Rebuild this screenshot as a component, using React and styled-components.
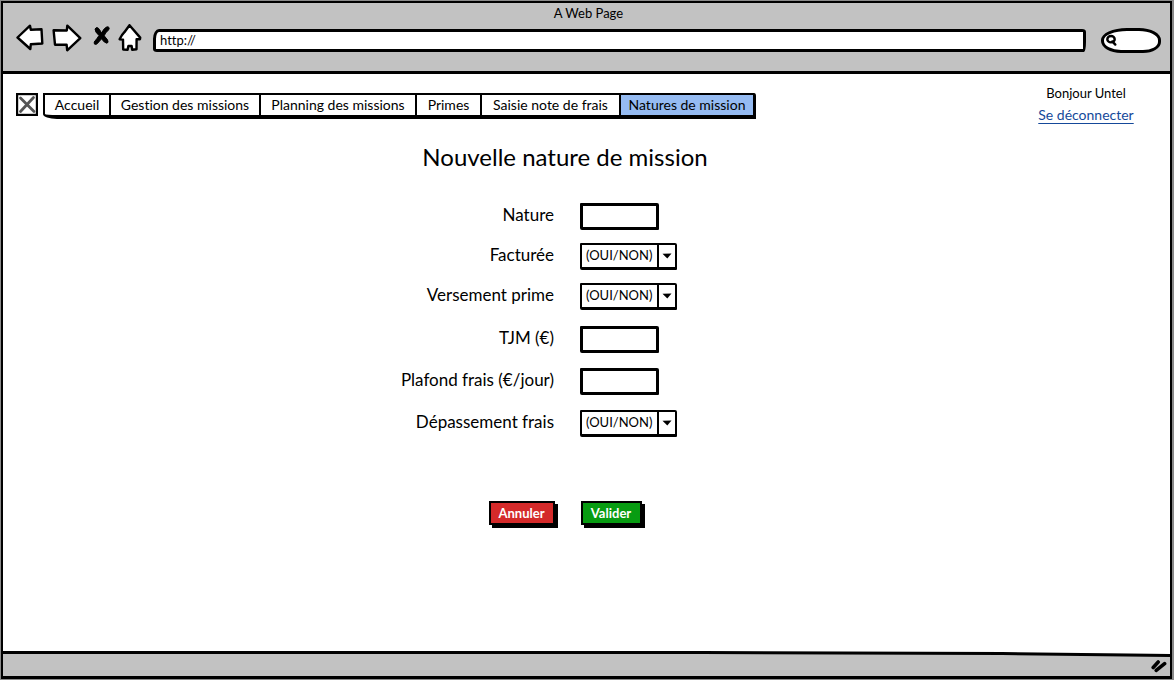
import React from 'react';
import styled, { createGlobalStyle } from 'styled-components';

const GlobalStyle = createGlobalStyle`
  *, *::before, *::after { box-sizing: border-box; }
  body {
    margin: 0;
    background: #fff;
    color: #000;
    font-family: Lato, "Open Sans", sans-serif;
    font-size: 13px;
    line-height: 16px;
    font-variant-ligatures: none;
  }
  button, input, select { font: inherit; color: inherit; margin: 0; }
`;

const Browser = styled.div`
  display: flex;
  flex-direction: column;
  min-height: 100vh;
  border: 1px solid #8a8a8a;
  border-width: 1px 2px 1px 1px;
`;

const Frame = styled.div`
  flex: 1;
  display: flex;
  flex-direction: column;
  border: 2px solid #000;
  border-bottom-width: 3px;
`;

const Chrome = styled.header`
  background: #c2c2c2;
  border-bottom: 3px solid #000;
  padding: 2px 9px 13px 13px;
`;

const PageTitle = styled.div`
  text-align: center;
  font-size: 13px;
  line-height: 17px;
`;

const Toolbar = styled.div`
  display: flex;
  align-items: center;
  height: 36px;
`;

const NavButtons = styled.div`
  display: flex;
  align-items: flex-start;
  height: 32px;
`;

const IconButton = styled.button`
  display: block;
  padding: 0;
  border: 0;
  background: none;
  line-height: 0;
  margin-right: ${(p) => p.$after}px;
`;

const AddressBar = styled.input`
  flex: 1;
  min-width: 0;
  height: 23px;
  margin-right: 15px;
  padding: 0 4px;
  border: 3px solid #000;
  border-radius: 6px 4px 2px 4px / 10px 3px 10px 3px;
  background: #fff;
  outline: none;
`;

const SearchBox = styled.label`
  display: flex;
  align-items: center;
  width: 60px;
  height: 25px;
  padding-left: 2px;
  border: 3px solid #000;
  border-radius: 26px 22px 18px 20px / 12px 12px 11px 12px;
  background: #fff;
`;

const SearchInput = styled.input`
  flex: 1;
  min-width: 0;
  border: 0;
  padding: 0;
  height: 16px;
  background: none;
  outline: none;
`;

const Content = styled.main`
  flex: 1;
  padding: 19px 36px 60px 13px;
`;

const TopRow = styled.div`
  display: flex;
  align-items: flex-start;
  justify-content: space-between;
`;

const MenuGroup = styled.div`
  display: flex;
  align-items: flex-start;
  gap: 5px;
`;

const Menu = styled.nav`
  display: flex;
  border: 2px solid #000;
  border-width: 2px 3px 4px 2px;
  border-radius: 0 2px 0 14px / 0 3px 0 5px;
`;

const MenuLink = styled.a`
  width: ${(p) => p.$width}px;
  height: 20px;
  font-size: 14px;
  line-height: 20px;
  text-align: center;
  white-space: nowrap;
  color: #000;
  text-decoration: none;
  background: ${(p) => (p.$active ? '#95bbf2' : 'transparent')};
  & + & { border-left: 2px solid #000; }
`;

const UserPanel = styled.div`
  display: flex;
  flex-direction: column;
  align-items: center;
  width: 96px;
  line-height: 21px;
  margin-top: -10px;
  white-space: nowrap;
`;

const LogoutLink = styled.a`
  font-size: 14px;
  color: #15499a;
  text-decoration: underline;
  text-underline-offset: 3px;
`;

const Heading = styled.h1`
  margin: 18px 20px 32px 0;
  text-align: center;
  font-size: 24px;
  line-height: 28px;
  font-weight: 400;
`;

const Form = styled.form`
  display: flex;
  flex-direction: column;
  gap: 16px;
`;

const FieldGroup = styled.div`
  display: flex;
  flex-direction: column;
  gap: ${(p) => p.$gap}px;
`;

const Row = styled.div`
  display: grid;
  grid-template-columns: 1fr 1fr;
  column-gap: 26px;
  align-items: center;
  padding-right: 16px;
`;

const Label = styled.label`
  justify-self: end;
  padding-bottom: 3px;
  font-size: 17px;
  line-height: 20px;
`;

const TextInput = styled.input`
  width: 79px;
  height: 27px;
  padding: 0 4px;
  border: 3px solid #000;
  border-radius: 1px 2px 1px 2px;
  background: #fff;
  outline: none;
`;

const SelectFrame = styled.div`
  display: flex;
  position: relative;
  width: 97px;
  height: 27px;
  border: 2px solid #000;
  border-bottom-width: 3px;
  border-radius: 1px 2px 1px 2px;
`;

const Select = styled.select`
  appearance: none;
  width: 100%;
  height: 100%;
  padding: 0 20px 2px 4px;
  border: 0;
  background: transparent;
  outline: none;
`;

const Arrow = styled.span`
  position: absolute;
  inset: 0 0 0 auto;
  width: 18px;
  display: flex;
  align-items: center;
  justify-content: center;
  border-left: 2px solid #000;
  pointer-events: none;
`;

const Actions = styled(Row)`
  margin-top: 48px;
  padding-right: 15px;
`;

const ActionButton = styled.button`
  justify-self: ${(p) => p.$side};
  min-width: ${(p) => p.$width}px;
  height: 24px;
  padding: 0 6px;
  border: 2px solid #000;
  background: ${(p) => p.$color};
  box-shadow: 3px 3px 0 #000;
  color: #fff;
  font-weight: 700;
  line-height: 20px;
`;

const StatusBar = styled.footer`
  position: relative;
  display: flex;
  align-items: center;
  justify-content: flex-end;
  height: 24px;
  padding: 4px 3px 0 0;
  background: #c2c2c2;
`;

const StatusEdge = styled.svg`
  position: absolute;
  left: 0;
  top: -1px;
  width: 100%;
  height: 6px;
`;

const BackIcon = () => (
  <svg width="28" height="27" viewBox="0 0 28 27" fill="#fff" stroke="#000" strokeWidth="2.4" strokeLinejoin="round">
    <path d="M1.5 13.5 L14 1.7 L14.8 5.8 L25.5 5.2 L26.3 19.5 L14.8 20.3 L14.3 25 Z" />
  </svg>
);

const ForwardIcon = () => (
  <svg width="30" height="28" viewBox="0 0 30 28" fill="#fff" stroke="#000" strokeWidth="2.4" strokeLinejoin="round">
    <path d="M1.6 6.2 L14.8 6.5 L15.3 1.6 L28.3 14.2 L15.2 26.3 L14.6 20.6 L3 20.7 Z" />
  </svg>
);

const StopIcon = () => (
  <svg width="18" height="22" viewBox="0 -2 18 22" fill="#000" stroke="#000" strokeLinejoin="round">
    <path d="M2 3 Q4 0 6.5 3.5 L8.5 7 Q11 2 14 .8 Q17.5 1 15.5 4 Q12 7 11.2 9.8 L14.5 13.8 Q16 17 13.8 17.2 Q11.5 17 8.5 12.8 Q6 16 3.5 18.3 Q.5 19 1.2 16 Q4.5 12 6 9.5 Q2 6 2 3 Z" />
  </svg>
);

const HomeIcon = () => (
  <svg width="24" height="29" viewBox="0 0 24 29" fill="#fff" stroke="#000" strokeWidth="2.4" strokeLinejoin="round">
    <path d="M11.5 1.2 L22.2 13.6 L22 15.2 L18.6 15.2 L18.5 25.3 L14.2 25.8 L13.6 22 L10.4 22 L9.6 25.8 L5.2 25.6 L5 15.6 L1.6 15.2 Q4 10.5 6.4 8.2 Z" />
  </svg>
);

const SearchIcon = () => (
  <svg width="12" height="13" viewBox="0 0 12 13" fill="none" stroke="#000" strokeWidth="2.4" strokeLinecap="round">
    <ellipse cx="5" cy="5.2" rx="3.7" ry="3.2" />
    <path d="M6.3 7.4 L9.3 10.6" />
  </svg>
);

const ImagePlaceholder = () => (
  <svg width="22" height="23" viewBox="0 0 22 23" fill="none" aria-label="Logo">
    <rect x="1" y="1" width="20" height="21" fill="#fff" stroke="#000" strokeWidth="2.4" />
    <path d="M4.5 5 L18 18.5 M17.5 4.5 L4.5 18.5" stroke="#555" strokeWidth="2.8" strokeLinecap="round" />
  </svg>
);

const ResizeGrip = () => (
  <svg width="16" height="14" viewBox="0 0 16 14" fill="none" stroke="#000" strokeWidth="3.6" strokeLinecap="round">
    <path d="M2.2 8.5 L7.2 3 M5.2 11.4 L13.6 4.6" />
  </svg>
);

const tabs = [
  { label: 'Accueil', width: 64 },
  { label: 'Gestion des missions', width: 150 },
  { label: 'Planning des missions', width: 156 },
  { label: 'Primes', width: 65 },
  { label: 'Saisie note de frais', width: 139 },
  { label: 'Natures de mission', width: 134, active: true },
];

const fieldGroups = [
  {
    gap: 13,
    fields: [
      { id: 'nature', label: 'Nature' },
      { id: 'facturee', label: 'Facturée', choice: true },
      { id: 'versement', label: 'Versement prime', choice: true },
    ],
  },
  {
    gap: 15,
    fields: [
      { id: 'tjm', label: 'TJM (€)' },
      { id: 'plafond', label: 'Plafond frais (€/jour)' },
      { id: 'depassement', label: 'Dépassement frais', choice: true },
    ],
  },
];

function YesNoSelect({ id }) {
  return (
    <SelectFrame>
      <Select id={id} defaultValue="">
        <option value="">(OUI/NON)</option>
        <option>OUI</option>
        <option>NON</option>
      </Select>
      <Arrow>
        <svg width="10" height="6" viewBox="0 0 10 6">
          <path d="M.5 .8 L9.5 .5 L5.3 5.5 Z" />
        </svg>
      </Arrow>
    </SelectFrame>
  );
}

export default function App() {
  return (
    <Browser>
      <GlobalStyle />
      <Frame>
        <Chrome>
          <PageTitle>A Web Page</PageTitle>
          <Toolbar>
            <NavButtons>
              <IconButton $after={8} aria-label="Back"><BackIcon /></IconButton>
              <IconButton $after={11} aria-label="Forward"><ForwardIcon /></IconButton>
              <IconButton $after={7} aria-label="Stop"><StopIcon /></IconButton>
              <IconButton $after={11} aria-label="Home"><HomeIcon /></IconButton>
            </NavButtons>
            <AddressBar aria-label="Address" defaultValue="http://" />
            <SearchBox>
              <SearchIcon />
              <SearchInput aria-label="Search" />
            </SearchBox>
          </Toolbar>
        </Chrome>

        <Content>
          <TopRow>
            <MenuGroup>
              <ImagePlaceholder />
              <Menu>
                {tabs.map((tab) => (
                  <MenuLink key={tab.label} href="#" $width={tab.width} $active={tab.active}>
                    {tab.label}
                  </MenuLink>
                ))}
              </Menu>
            </MenuGroup>
            <UserPanel>
              <span>Bonjour Untel</span>
              <LogoutLink href="#">Se déconnecter</LogoutLink>
            </UserPanel>
          </TopRow>

          <Heading>Nouvelle nature de mission</Heading>

          <Form onSubmit={(e) => e.preventDefault()}>
            {fieldGroups.map((group) => (
              <FieldGroup key={group.gap} $gap={group.gap}>
                {group.fields.map((field) => (
                  <Row key={field.id}>
                    <Label htmlFor={field.id}>{field.label}</Label>
                    {field.choice ? <YesNoSelect id={field.id} /> : <TextInput id={field.id} />}
                  </Row>
                ))}
              </FieldGroup>
            ))}
            <Actions>
              <ActionButton type="button" $side="end" $width={66} $color="#d42a2a">Annuler</ActionButton>
              <ActionButton type="submit" $side="start" $width={61} $color="#089c12">Valider</ActionButton>
            </Actions>
          </Form>
        </Content>

        <StatusBar>
          <StatusEdge viewBox="0 0 1168 6" preserveAspectRatio="none">
            <path d="M0 0 H700 L1168 3 V0 Z" fill="#fff" />
            <path d="M0 1.5 L700 1.5 L1000 2.5 L1168 4.5" fill="none" stroke="#000" strokeWidth="3" />
          </StatusEdge>
          <ResizeGrip />
        </StatusBar>
      </Frame>
    </Browser>
  );
}
